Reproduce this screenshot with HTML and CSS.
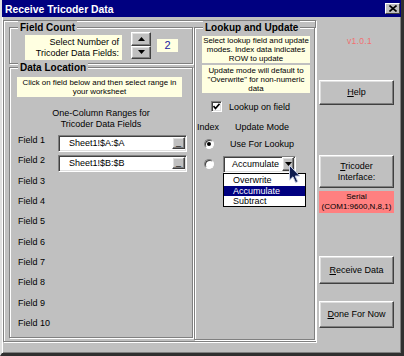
FILE: index.html
```html
<!DOCTYPE html>
<html lang="en">

<head>
    <meta charset="UTF-8">
    <title>Receive Tricoder Data</title>
    <link rel="stylesheet" href="styles.css">
</head>

<body>
    <div class="window">
        <div class="titlebar">
            <span class="title">Receive Tricoder Data</span>
            <span class="close-btn">
                <svg width="8" height="7" viewBox="0 0 8 7"><path d="M0.5 0.5 L7.5 6.5 M7.5 0.5 L0.5 6.5" stroke="#000" stroke-width="1.6"/></svg>
            </span>
        </div>

        <div class="client">
            <div class="outer-frame">
                <div class="left-col">
                    <div class="frame field-count">
                        <span class="frame-title">Field Count</span>
                        <div class="note count-note">Select Number of<br>Tricoder Data Fields:</div>
                        <div class="spin">
                            <span class="raised spin-btn">
                                <svg width="7" height="4" viewBox="0 0 7 4"><path d="M3.5 0 L7 4 L0 4 Z" fill="#000"/></svg>
                            </span>
                            <span class="raised spin-btn">
                                <svg width="7" height="4" viewBox="0 0 7 4"><path d="M0 0 L7 0 L3.5 4 Z" fill="#000"/></svg>
                            </span>
                        </div>
                        <div class="count-value">2</div>
                    </div>

                    <div class="frame data-location">
                        <span class="frame-title">Data Location</span>
                        <div class="note small location-note">Click on field below and then select range in<br>your worksheet</div>
                        <div class="ranges-head">One-Column Ranges for<br>Tricoder Data Fields</div>
                        <div class="field-list">
                            <div class="field-row">
                                <span class="field-name">Field 1</span>
                                <div class="sunken refedit"><span>Sheet1!$A:$A</span><span class="raised ref-btn">_</span></div>
                            </div>
                            <div class="field-row">
                                <span class="field-name">Field 2</span>
                                <div class="sunken refedit"><span>Sheet1!$B:$B</span><span class="raised ref-btn">_</span></div>
                            </div>
                            <div class="field-row"><span class="field-name">Field 3</span></div>
                            <div class="field-row"><span class="field-name">Field 4</span></div>
                            <div class="field-row"><span class="field-name">Field 5</span></div>
                            <div class="field-row"><span class="field-name">Field 6</span></div>
                            <div class="field-row"><span class="field-name">Field 7</span></div>
                            <div class="field-row"><span class="field-name">Field 8</span></div>
                            <div class="field-row"><span class="field-name">Field 9</span></div>
                            <div class="field-row"><span class="field-name">Field 10</span></div>
                        </div>
                    </div>
                </div>

                <div class="frame lookup">
                    <span class="frame-title">Lookup and Update</span>
                    <div class="note small lookup-note">Select lookup field and update<br>modes. Index data indicates<br>ROW to update</div>
                    <div class="note small lookup-note second">Update mode will default to<br>"Overwrite" for non-numeric<br>data</div>

                    <div class="check-row">
                        <span class="sunken checkbox">
                            <svg width="7" height="7" viewBox="0 0 7 7"><path d="M0.5 3 L2.5 5.5 L6.5 0.8" stroke="#000" stroke-width="1.6" fill="none"/></svg>
                        </span>
                        <span>Lookup on field</span>
                    </div>

                    <div class="mode-grid">
                        <span class="col-index">Index</span>
                        <span class="col-mode">Update Mode</span>

                        <span class="radio checked"></span>
                        <span class="col-mode">Use For Lookup</span>

                        <span class="radio"></span>
                        <div class="sunken combo">
                            <span>Accumulate</span>
                            <span class="raised combo-btn">
                                <svg width="7" height="4" viewBox="0 0 7 4"><path d="M0 0 L7 0 L3.5 4 Z" fill="#000"/></svg>
                            </span>
                            <ul class="dropdown">
                                <li>Overwrite</li>
                                <li class="selected">Accumulate</li>
                                <li>Subtract</li>
                            </ul>
                            <svg class="cursor" width="12" height="19" viewBox="0 0 12 19">
                                <path d="M0.5 0.5 L0.5 15 L4 11.8 L6.6 17.6 L8.8 16.6 L6.2 11 L10.8 11 Z" fill="#0d1b4f" stroke="#c9d0e6" stroke-width="1"/>
                            </svg>
                        </div>
                    </div>
                </div>
            </div>

            <div class="side">
                <div class="version">v1.0.1</div>
                <div class="raised button help-btn"><span><u>H</u>elp</span></div>
                <div class="raised button tricoder-btn"><span><u>T</u>ricoder<br>Interface:</span></div>
                <div class="serial">Serial<br>(COM1:9600,N,8,1)</div>
                <div class="raised button receive-btn"><span><u>R</u>eceive Data</span></div>
                <div class="raised button done-btn"><span><u>D</u>one For Now</span></div>
            </div>
        </div>
    </div>
</body>

</html>
```

FILE: styles.css
```css
body {
    margin: 0;
    font-family: "Liberation Sans", Arial, sans-serif;
    font-size: 9px;
    color: #000;
    background-color: #c0c0c0;
}

.window {
    box-sizing: border-box;
    width: 404px;
    height: 356px;
    background-color: #c0c0c0;
    border-left: 2px solid #dfdfdf;
    border-right: 3px solid #303030;
    border-bottom: 3px solid #303030;
    box-shadow: inset 1px 0 0 #fff, inset -1px -1px 0 #808080;
}

.titlebar {
    height: 17px;
    background-color: #000080;
    color: white;
    display: flex;
    align-items: center;
    justify-content: space-between;
    padding: 0 1px 0 3px;
}

.title {
    font-weight: bold;
    font-size: 10.4px;
    padding-top: 1px;
}

.close-btn {
    box-sizing: border-box;
    width: 15px;
    height: 11px;
    display: flex;
    align-items: center;
    justify-content: center;
    background-color: #c0c0c0;
    border: 1px solid;
    border-color: #fff #404040 #404040 #fff;
}

.raised {
    box-sizing: border-box;
    background-color: #c0c0c0;
    border: 1px solid;
    border-color: #fff #404040 #404040 #fff;
    box-shadow: inset -1px -1px 0 #808080, inset 1px 1px 0 #dfdfdf;
}

.sunken {
    box-sizing: border-box;
    background-color: white;
    border: 1px solid;
    border-color: #808080 #fff #fff #808080;
    box-shadow: inset 1px 1px 0 #404040, inset -1px -1px 0 #dfdfdf;
}

.client {
    display: flex;
    padding: 3px 0 0 1px;
}

.frame,
.outer-frame {
    box-sizing: border-box;
    border: 1px solid #808080;
    box-shadow: inset 1px 1px 0 #fff, 1px 1px 0 #fff;
}

.outer-frame {
    width: 313px;
    height: 322px;
    display: flex;
    padding: 6px 0 0 5px;
}

.frame {
    position: relative;
}

.frame-title {
    position: absolute;
    top: -7px;
    left: 8px;
    padding: 0 2px;
    background-color: #c0c0c0;
    font-weight: bold;
    font-size: 10px;
    line-height: 13px;
    white-space: nowrap;
}

.left-col {
    width: 184px;
    display: flex;
    flex-direction: column;
    gap: 3px;
}

.note {
    box-sizing: border-box;
    background-color: #ffffe1;
    white-space: nowrap;
}

.note.small {
    font-size: 7.9px;
    line-height: 9px;
    text-align: center;
}

/* field count */

.field-count {
    height: 37px;
    display: flex;
    align-items: center;
    padding-left: 15px;
}

.count-note {
    width: 97px;
    height: 25px;
    padding: 2px 3px 0 0;
    line-height: 11px;
    text-align: right;
    margin-top: 3px;
}

.spin {
    display: flex;
    flex-direction: column;
    margin-left: 9px;
}

.spin-btn {
    width: 20px;
    height: 13.5px;
    display: flex;
    align-items: center;
    justify-content: center;
}

.count-value {
    width: 21px;
    height: 13px;
    margin-left: 6px;
    background-color: #ffffe1;
    color: #1a1aa0;
    font-size: 11px;
    line-height: 13px;
    text-align: center;
}

/* data location */

.data-location {
    height: 271px;
    padding: 9px 0 0 7px;
}

.location-note {
    width: 165px;
    height: 20px;
    padding-top: 0.5px;
}

.ranges-head {
    width: 165px;
    margin-top: 10.5px;
    line-height: 11px;
    text-align: center;
    padding-left: 3px;
    box-sizing: border-box;
}

.field-list {
    margin-top: 5px;
}

.field-row {
    display: flex;
    align-items: flex-start;
    height: 20.33px;
    padding-left: 1px;
}

.field-name {
    width: 40px;
    line-height: 11px;
    margin-top: 0.5px;
}

.refedit {
    width: 129px;
    height: 17px;
    display: flex;
    align-items: center;
    justify-content: space-between;
    padding: 0 1px 0 10px;
}

.ref-btn {
    width: 13px;
    height: 12px;
    font-size: 9px;
    line-height: 8px;
    text-align: center;
}

/* lookup and update */

.lookup {
    width: 121px;
    height: 313px;
    margin-left: 1px;
    padding: 8px 0 0 7px;
}

.lookup-note {
    width: 108px;
    height: 27px;
}

.lookup-note.second {
    height: 28px;
    margin-top: 2px;
    padding-top: 1px;
}

.check-row {
    display: flex;
    align-items: center;
    gap: 7px;
    height: 11px;
    margin: 8px 0 0 9px;
}

.checkbox {
    width: 11px;
    height: 11px;
    display: flex;
    align-items: center;
    justify-content: center;
}

.mode-grid {
    display: grid;
    grid-template-columns: 27px 80px;
    grid-template-rows: 11.5px 18px 18px;
    row-gap: 2px;
    align-items: center;
    margin: 9.5px 0 0 -7px;
    line-height: 11px;
}

.col-index {
    padding-left: 2px;
    align-self: start;
}

.col-mode {
    text-align: center;
}

.mode-grid>.col-mode:nth-child(2) {
    align-self: start;
}

.radio {
    box-sizing: border-box;
    justify-self: center;
    width: 10px;
    height: 10px;
    margin-left: 1px;
    border-radius: 50%;
    background-color: white;
    border: 1px solid;
    border-color: #808080 #fff #fff #808080;
    box-shadow: inset 1px 1px 0 #404040;
    display: flex;
    align-items: center;
    justify-content: center;
}

.radio.checked::after {
    content: "";
    width: 4px;
    height: 4px;
    border-radius: 50%;
    background-color: #000;
}

.combo {
    position: relative;
    width: 73px;
    height: 17px;
    margin-left: 1px;
    display: flex;
    align-items: center;
    justify-content: space-between;
    padding: 0 1px 0 8px;
}

.combo-btn {
    width: 12px;
    height: 14px;
    display: flex;
    align-items: center;
    justify-content: center;
}

.dropdown {
    position: absolute;
    top: 16.5px;
    left: -1px;
    box-sizing: border-box;
    width: 83px;
    height: 34px;
    margin: 0;
    padding: 1px 0 0;
    list-style: none;
    background-color: white;
    border: 1px solid #000;
}

.dropdown li {
    height: 10.7px;
    line-height: 10.7px;
    padding-left: 9px;
}

.dropdown li.selected {
    background-color: #000080;
    color: white;
}

.cursor {
    position: absolute;
    left: 65px;
    top: 8px;
}

/* right side */

.side {
    width: 75px;
    margin-left: 3px;
    display: flex;
    flex-direction: column;
}

.version {
    margin-top: 16px;
    height: 11px;
    padding-left: 6px;
    text-align: center;
    color: #f07070;
    font-size: 8.5px;
    line-height: 11px;
    letter-spacing: 0.3px;
}

.button {
    display: flex;
    align-items: center;
    justify-content: center;
    text-align: center;
    line-height: 11px;
}

.help-btn {
    margin-top: 33px;
    height: 25px;
}

.tricoder-btn {
    margin-top: 50px;
    height: 33px;
}

.serial {
    margin-top: 3px;
    height: 22px;
    background-color: #ff8080;
    text-align: center;
    font-size: 8px;
    line-height: 10.5px;
    padding-top: 0.5px;
    box-sizing: border-box;
    white-space: nowrap;
}

.receive-btn {
    margin-top: 43px;
    height: 28px;
}

.done-btn {
    margin-top: 17px;
    height: 27px;
}
```
